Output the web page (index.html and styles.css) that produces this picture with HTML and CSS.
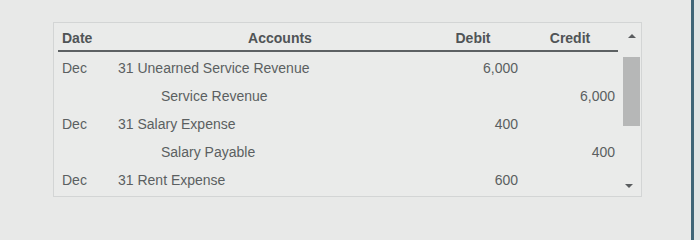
FILE: index.html
```html
<!DOCTYPE html>
<html>
<head>
<meta charset="utf-8">
<link rel="stylesheet" href="styles.css">
</head>
<body>
<div class="screen">
  <div class="panel">
    <div class="table">
      <div class="row head">
        <div class="c date">Date</div>
        <div class="c acct">Accounts</div>
        <div class="c debit">Debit</div>
        <div class="c credit">Credit</div>
      </div>
      <div class="row">
        <div class="c date">Dec</div>
        <div class="c acct">31 Unearned Service Revenue</div>
        <div class="c debit">6,000</div>
        <div class="c credit"></div>
      </div>
      <div class="row">
        <div class="c date"></div>
        <div class="c acct indent">Service Revenue</div>
        <div class="c debit"></div>
        <div class="c credit">6,000</div>
      </div>
      <div class="row">
        <div class="c date">Dec</div>
        <div class="c acct">31 Salary Expense</div>
        <div class="c debit">400</div>
        <div class="c credit"></div>
      </div>
      <div class="row">
        <div class="c date"></div>
        <div class="c acct indent">Salary Payable</div>
        <div class="c debit"></div>
        <div class="c credit">400</div>
      </div>
      <div class="row">
        <div class="c date">Dec</div>
        <div class="c acct">31 Rent Expense</div>
        <div class="c debit">600</div>
        <div class="c credit"></div>
      </div>
    </div>
    <div class="scroll">
      <div class="arrow up"></div>
      <div class="thumb"></div>
      <div class="track"></div>
      <div class="arrow down"></div>
    </div>
  </div>
</div>
<div class="edge"></div>
<div class="beyond"></div>
</body>
</html>
```
FILE: styles.css
```css
html, body {
  margin: 0;
  height: 240px;
  overflow: hidden;
}
body {
  display: flex;
  background: #e8e9e8;
  font-family: "Liberation Sans", Arial, sans-serif;
  font-size: 14px;
  color: #5b5f61;
}
.screen {
  flex: 1;
  padding: 22px 0 0 53px;
}
.panel {
  width: 589px;
  height: 175px;
  border: 1px solid #d3d5d5;
  background: #eaebea;
  display: flex;
  box-sizing: border-box;
}
.table {
  width: 560px;
  margin-left: 4px;
}
.row {
  display: grid;
  grid-template-columns: 56px 316px 92px 96px;
  height: 28px;
  line-height: 28px;
}
.row.head {
  height: 29px;
  line-height: 16px;
  padding-top: 7px;
  box-sizing: border-box;
  border-bottom: 2px solid #5d6163;
  font-weight: bold;
  color: #505456;
  margin-bottom: 2px;
}
.c { white-space: nowrap; }
.date { padding-left: 4px; }
.acct { padding-left: 4px; }
.acct.indent { padding-left: 47px; }
.debit { text-align: right; padding-right: 4px; }
.credit { text-align: right; padding-right: 3px; }
.head .acct { text-align: center; padding-left: 16px; }
.head .debit { text-align: center; padding-right: 6px; }
.head .credit { text-align: center; padding-right: 0; }
.scroll {
  margin-left: 5px;
  width: 17px;
  display: flex;
  flex-direction: column;
  align-items: center;
  padding-top: 11px;
}
.arrow {
  width: 0;
  height: 0;
  border-left: 4px solid transparent;
  border-right: 4px solid transparent;
}
.arrow.up {
  border-bottom: 4px solid #5a5d5f;
  margin-bottom: 19px;
}
.thumb {
  width: 17px;
  height: 69px;
  background: #b6b7b7;
}
.track { flex: 1; }
.arrow.down {
  border-top: 4px solid #5a5d5f;
  margin-bottom: 8px;
  margin-right: 5px;
}
.edge {
  width: 3px;
  background: #3f6577;
}
.beyond {
  width: 6px;
  background: #dfe4e4;
}
```
